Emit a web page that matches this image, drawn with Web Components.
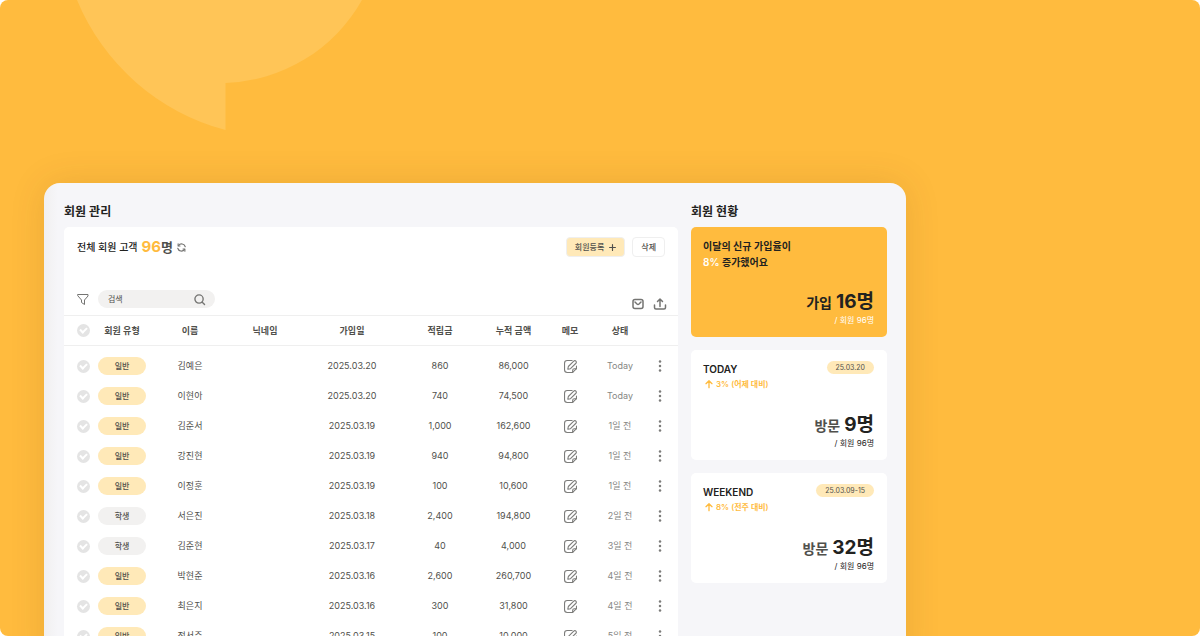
<!DOCTYPE html>
<html lang="ko">
<head>
<meta charset="UTF-8">
<meta name="viewport" content="width=device-width, initial-scale=1.0">
<title>회원 관리</title>
<style>
  :root {
    --brand: #ffbb3e;
    --brand-soft: #ffe9b8;
    --ink: #222220;
    --text: #50504c;
    --muted: #868683;
    --line: #efefef;
    --chip: #f2f1f0;
  }
  body {
    margin: 0;
    background: white;
    color: var(--text);
    font-family: Inter, "Noto Sans CJK KR", sans-serif;
    font-size: 9px;
    line-height: 16px;
  }
</style>
</head>
<body>
<hero-stage>
  <admin-board>
    <board-section slot="main" heading="회원 관리">
      <member-panel></member-panel>
    </board-section>
    <board-section slot="side" heading="회원 현황">
      <stat-card filled label="가입" value="16명" total="96명">
        <span slot="title">이달의 신규 가입율이<br><em>8%</em> 증가했어요</span>
      </stat-card>
      <stat-card label="방문" value="9명" total="96명" date="25.03.20" trend="3% (어제 대비)">
        <span slot="title">TODAY</span>
      </stat-card>
      <stat-card label="방문" value="32명" total="96명" date="25.03.09-15" trend="8% (전주 대비)">
        <span slot="title">WEEKEND</span>
      </stat-card>
    </board-section>
  </admin-board>
</hero-stage>

<script>
const ICONS = {
  refresh: '<path d="M22 10A10 10 0 0 0 4 7M2 14a10 10 0 0 0 18 3"/><path d="M3 2v6h5M21 22v-6h-5"/>',
  plus: '<path d="M12 2v20M2 12h20"/>',
  filter: '<path d="M2 3h20v3l-7 8v9l-6-4v-5L2 6z"/>',
  search: '<circle cx="11" cy="11" r="9"/><path d="M18 18l5 5"/>',
  mail: '<rect x="2" y="3" width="20" height="18" rx="4"/><path d="M6 8l4 4a3 3 0 0 0 4 0l4-4"/>',
  upload: '<path d="M12 17V2M7 7l5-5 5 5M1 14v5a3 3 0 0 0 3 3h16a3 3 0 0 0 3-3v-5"/>',
  memo: '<path d="M15 1H6a5 5 0 0 0-5 5v12a5 5 0 0 0 5 5h10l7-7v-5"/><path d="M23 16h-4a3 3 0 0 0-3 3v4"/><path d="M7 17l1-5L18 2a2.500 2.500 0 0 1 4 4L12 16z"/>',
  more: '<g fill="currentColor" stroke="none"><circle cx="12" cy="1" r="3"/><circle cx="12" cy="12" r="3"/><circle cx="12" cy="23" r="3"/></g>',
  up: '<path d="M12 23V2M3 11l9-9 9 9"/>'
};

class UiIcon extends HTMLElement {
  connectedCallback() {
    const size = this.getAttribute('size') || 12;
    const stroke = this.getAttribute('stroke') || 2;
    this.attachShadow({ mode: 'open' });
    this.shadowRoot.innerHTML = `
      <style>
        :host { display: inline-flex; flex: none; }
        svg { display: block; overflow: visible; }
      </style>
      <svg width="${size}" height="${size}" viewBox="0 0 24 24" fill="none" stroke="currentColor"
        stroke-width="${stroke}" stroke-linecap="round" stroke-linejoin="round" aria-hidden="true">
        ${ICONS[this.getAttribute('name')]}
      </svg>
    `;
  }
}

class HeroStage extends HTMLElement {
  connectedCallback() {
    this.attachShadow({ mode: 'open' });
    this.shadowRoot.innerHTML = `
      <style>
        :host {
          display: block;
          position: relative;
          box-sizing: border-box;
          height: 100vh;
          padding: 183px 294px 0 44px;
          overflow: hidden;
          border-radius: 8px;
          background: var(--brand);
        }
        .bubble {
          position: absolute;
          top: 0;
          left: 0;
        }
      </style>
      <svg class="bubble" width="400" height="140" aria-hidden="true">
        <path fill="#ffc557" d="M77 0A222 222 0 0 0 225.500 130V83A163 163 0 0 0 362 0z"/>
      </svg>
      <slot></slot>
    `;
  }
}

class AdminBoard extends HTMLElement {
  connectedCallback() {
    this.attachShadow({ mode: 'open' });
    this.shadowRoot.innerHTML = `
      <style>
        :host {
          display: grid;
          position: relative;
          grid-template-columns: minmax(0, 1fr) 196px;
          gap: 13px;
          padding: 21px 19px 20px 20px;
          border-radius: 16px;
          background: linear-gradient(90deg, #f1f0f0, #f6f6f9 14px);
          box-shadow: 0 0 36px rgba(90, 60, 0, 0.12);
        }
      </style>
      <slot name="main"></slot>
      <slot name="side"></slot>
    `;
  }
}

class BoardSection extends HTMLElement {
  connectedCallback() {
    this.attachShadow({ mode: 'open' });
    this.shadowRoot.innerHTML = `
      <style>
        :host { display: block; }
        h2 {
          margin: 0 0 7px;
          color: var(--ink);
          font-size: 12px;
          font-weight: 600;
          line-height: 16px;
        }
        .stack {
          display: flex;
          flex-direction: column;
          gap: 13px;
        }
      </style>
      <h2>${this.getAttribute('heading')}</h2>
      <div class="stack"><slot></slot></div>
    `;
  }
}

class StatCard extends HTMLElement {
  connectedCallback() {
    const date = this.getAttribute('date');
    const trend = this.getAttribute('trend');
    this.attachShadow({ mode: 'open' });
    this.shadowRoot.innerHTML = `
      <style>
        :host {
          display: flex;
          flex-direction: column;
          justify-content: space-between;
          box-sizing: border-box;
          min-height: 110px;
          padding: 11px 13px 11px 12px;
          border-radius: 5px;
          background: white;
        }
        .top {
          display: flex;
          justify-content: space-between;
          align-items: flex-start;
        }
        .title {
          color: var(--ink);
          font-size: 10px;
          font-weight: 600;
        }
        ::slotted(span) { display: block; }
        .date {
          padding: 0 9px;
          border-radius: 8px;
          background: var(--brand-soft);
          font-size: 7px;
          line-height: 13px;
        }
        .trend {
          display: flex;
          align-items: center;
          gap: 3px;
          padding-left: 2px;
          color: var(--brand);
          font-size: 8px;
          font-weight: 600;
          line-height: 14px;
        }
        .figures { text-align: right; }
        .main {
          display: flex;
          justify-content: flex-end;
          align-items: baseline;
          gap: 4px;
          font-size: 14px;
          font-weight: 600;
          line-height: 22px;
        }
        .main strong {
          color: var(--ink);
          font-size: 19px;
          font-weight: 700;
        }
        .total {
          color: var(--ink);
          font-size: 8px;
          line-height: 12px;
        }
        :host([filled]) { background: var(--brand); }
        :host([filled]) .main { color: var(--ink); }
        :host([filled]) .total { color: white; }
      </style>
      <div class="top">
        <div>
          <div class="title"><slot name="title"></slot></div>
          ${trend ? `<div class="trend"><ui-icon name="up" size="8" stroke="4"></ui-icon>${trend}</div>` : ''}
        </div>
        ${date ? `<span class="date">${date}</span>` : ''}
      </div>
      <div class="figures">
        <div class="main">${this.getAttribute('label')} <strong>${this.getAttribute('value')}</strong></div>
        <div class="total">/ 회원 ${this.getAttribute('total')}</div>
      </div>
    `;
    const em = this.querySelector('em');
    if (em) {
      em.style.color = 'white';
      em.style.fontStyle = 'normal';
    }
  }
}

class TypeBadge extends HTMLElement {
  connectedCallback() {
    this.attachShadow({ mode: 'open' });
    this.shadowRoot.innerHTML = `
      <style>
        :host {
          display: block;
          width: 48px;
          margin: 0 auto;
          border-radius: 9px;
          background: var(--brand-soft);
          font-size: 8px;
          font-weight: 500;
          line-height: 18px;
          text-align: center;
        }
        :host([kind="학생"]) { background: var(--chip); }
      </style>
      ${this.getAttribute('kind')}
    `;
  }
}

class MemberTable extends HTMLElement {
  connectedCallback() {
    const members = [
      ['일반', '김예은', '2025.03.20', '860', '86,000', 'Today'],
      ['일반', '이현아', '2025.03.20', '740', '74,500', 'Today'],
      ['일반', '김준서', '2025.03.19', '1,000', '162,600', '1일 전'],
      ['일반', '강진현', '2025.03.19', '940', '94,800', '1일 전'],
      ['일반', '이정훈', '2025.03.19', '100', '10,600', '1일 전'],
      ['학생', '서은진', '2025.03.18', '2,400', '194,800', '2일 전'],
      ['학생', '김준현', '2025.03.17', '40', '4,000', '3일 전'],
      ['일반', '박현준', '2025.03.16', '2,600', '260,700', '4일 전'],
      ['일반', '최은지', '2025.03.16', '300', '31,800', '4일 전'],
      ['일반', '정서준', '2025.03.15', '100', '10,000', '5일 전']
    ];
    const row = ([kind, name, date, points, amount, seen]) => `
      <tr>
        <td><input type="checkbox" aria-label="${name} 선택"></td>
        <td><type-badge kind="${kind}"></type-badge></td>
        <td>${name}</td>
        <td></td>
        <td>${date}</td>
        <td>${points}</td>
        <td>${amount}</td>
        <td><button type="button" aria-label="${name} 메모"><ui-icon name="memo" size="13"></ui-icon></button></td>
        <td class="seen">${seen}</td>
        <td><button type="button" aria-label="${name} 더보기"><ui-icon name="more" size="10"></ui-icon></button></td>
      </tr>`;
    this.attachShadow({ mode: 'open' });
    this.shadowRoot.innerHTML = `
      <style>
        :host { display: block; }
        table {
          width: 100%;
          table-layout: fixed;
          border-collapse: separate;
          border-spacing: 0;
        }
        th, td {
          box-sizing: border-box;
          height: 30px;
          padding: 0;
          text-align: center;
          vertical-align: middle;
          white-space: nowrap;
        }
        th {
          height: 31px;
          border-top: 1px solid var(--line);
          border-bottom: 1px solid var(--line);
          font-weight: 600;
        }
        tbody::before {
          content: '';
          display: block;
          height: 5px;
        }
        th:first-child, td:first-child { padding-left: 7px; }
        th:last-child, td:last-child { padding-right: 10px; }
        .seen { color: var(--muted); }
        input {
          display: grid;
          place-items: center;
          box-sizing: border-box;
          width: 13px;
          height: 13px;
          margin: 0 auto;
          padding-bottom: 2px;
          appearance: none;
          border-radius: 50%;
          background: #e4e4e4;
        }
        input::before {
          content: '';
          box-sizing: border-box;
          width: 7px;
          height: 5px;
          border: solid white;
          border-width: 0 0 2px 2px;
          transform: rotate(-45deg);
        }
        input:checked { background: var(--brand); }
        button {
          display: flex;
          margin: 0 auto;
          padding: 0;
          border: none;
          background: none;
          color: #7c7c7a;
          cursor: pointer;
        }
      </style>
      <table>
        <colgroup>
          <col style="width: 31px"><col style="width: 54px"><col style="width: 82px">
          <col style="width: 68px"><col style="width: 106px"><col style="width: 70px">
          <col style="width: 77px"><col style="width: 36px"><col style="width: 64px">
          <col style="width: 26px">
        </colgroup>
        <thead>
          <tr>
            <th><input type="checkbox" aria-label="전체 선택"></th>
            <th>회원 유형</th>
            <th>이름</th>
            <th>닉네임</th>
            <th>가입일</th>
            <th>적립금</th>
            <th>누적 금액</th>
            <th>메모</th>
            <th>상태</th>
            <th></th>
          </tr>
        </thead>
        <tbody>${members.map(row).join('')}</tbody>
      </table>
    `;
  }
}

class MemberPanel extends HTMLElement {
  connectedCallback() {
    this.attachShadow({ mode: 'open' });
    this.shadowRoot.innerHTML = `
      <style>
        :host {
          display: block;
          border-radius: 5px;
          background: white;
        }
        .summary, .tools, .group {
          display: flex;
          align-items: center;
        }
        .summary {
          justify-content: space-between;
          padding: 10px 13px 0;
        }
        .summary .group { gap: 4px; }
        .summary .actions { gap: 7px; }
        .label {
          color: var(--ink);
          font-size: 10px;
          font-weight: 500;
        }
        .count {
          font-size: 13px;
          font-weight: 700;
          line-height: 20px;
        }
        .count b {
          color: var(--brand);
          font-size: 15px;
          font-weight: 700;
        }
        button {
          display: flex;
          align-items: center;
          padding: 0;
          border: none;
          background: none;
          color: #747472;
          font: inherit;
          cursor: pointer;
        }
        .actions button {
          gap: 5px;
          padding: 0 8px;
          border: 1px solid var(--line);
          border-radius: 4px;
          color: var(--text);
          font-size: 8px;
          font-weight: 500;
          line-height: 18px;
        }
        .actions .add { background: var(--brand-soft); }
        .tools {
          justify-content: space-between;
          padding: 31px 12px 5px 13px;
        }
        .tools .group { gap: 9px; }
        .tools .links {
          gap: 10px;
          padding-top: 10px;
        }
        .search {
          display: flex;
          align-items: center;
          box-sizing: border-box;
          width: 117px;
          height: 18px;
          padding: 0 10px;
          border-radius: 9px;
          background: var(--chip);
        }
        input {
          flex: 1;
          min-width: 0;
          padding: 0;
          border: none;
          outline: none;
          background: none;
          color: var(--text);
          font: inherit;
          font-size: 8px;
        }
        input::placeholder { color: var(--text); }
      </style>
      <div class="summary">
        <div class="group">
          <span class="label">전체 회원 고객</span>
          <span class="count"><b>96</b>명</span>
          <button type="button" aria-label="새로고침"><ui-icon name="refresh" size="9" stroke="3"></ui-icon></button>
        </div>
        <div class="group actions">
          <button type="button" class="add">회원등록 <ui-icon name="plus" size="7" stroke="4"></ui-icon></button>
          <button type="button">삭제</button>
        </div>
      </div>
      <div class="tools">
        <div class="group">
          <button type="button" aria-label="필터"><ui-icon name="filter" size="12"></ui-icon></button>
          <div class="search">
            <input type="search" placeholder="검색" aria-label="검색">
            <button type="button" aria-label="찾기"><ui-icon name="search" size="11" stroke="3"></ui-icon></button>
          </div>
        </div>
        <div class="group links">
          <button type="button" aria-label="메일 보내기"><ui-icon name="mail" size="12" stroke="3"></ui-icon></button>
          <button type="button" aria-label="내보내기"><ui-icon name="upload" size="12" stroke="3"></ui-icon></button>
        </div>
      </div>
      <member-table></member-table>
    `;
  }
}

customElements.define('ui-icon', UiIcon);
customElements.define('type-badge', TypeBadge);
customElements.define('member-table', MemberTable);
customElements.define('member-panel', MemberPanel);
customElements.define('stat-card', StatCard);
customElements.define('board-section', BoardSection);
customElements.define('admin-board', AdminBoard);
customElements.define('hero-stage', HeroStage);
</script>
</body>
</html>
